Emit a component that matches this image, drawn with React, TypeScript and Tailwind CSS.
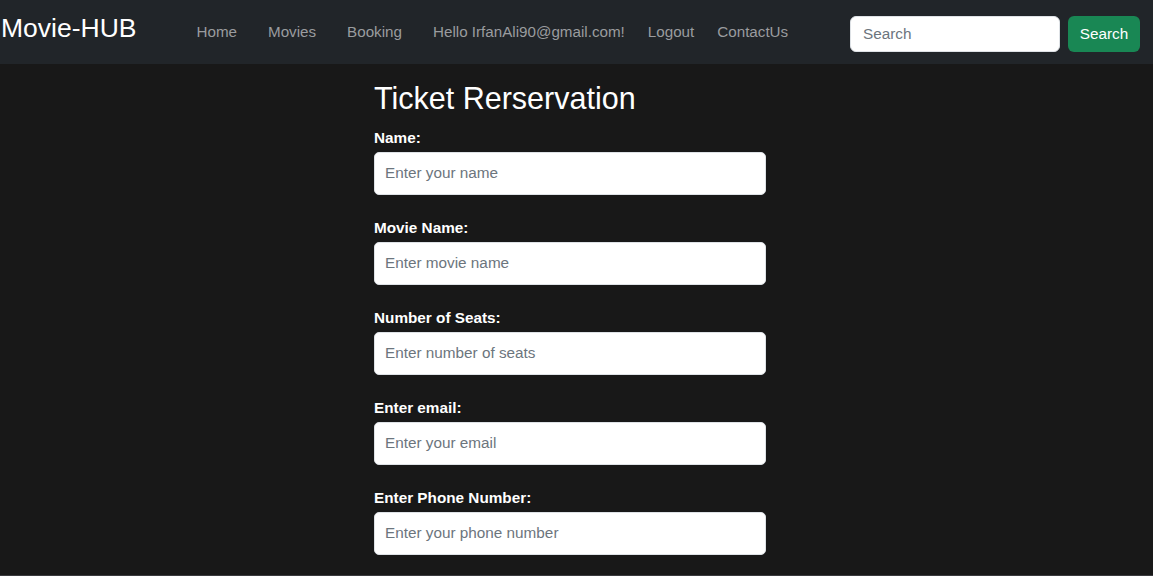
import React from "react";

const fields = [
  { label: "Name:", placeholder: "Enter your name" },
  { label: "Movie Name:", placeholder: "Enter movie name" },
  { label: "Number of Seats:", placeholder: "Enter number of seats" },
  { label: "Enter email:", placeholder: "Enter your email" },
  { label: "Enter Phone Number:", placeholder: "Enter your phone number" },
];

export default function App() {
  return (
    <div
      className="w-[1153px] h-[576px] overflow-hidden bg-[#181818] flex flex-col"
      style={{ fontFamily: '"Liberation Sans", Arial, sans-serif' }}
    >
      <nav className="h-[64px] shrink-0 bg-[#212529] flex items-center">
        <div className="text-[26.5px] text-white leading-none pl-[1px] pb-[7px]">Movie-HUB</div>
        <div className="flex items-center text-[15.2px] text-[#9a9c9f] ml-[60px] pt-[1px]">
          <span>Home</span>
          <span className="ml-[31px]">Movies</span>
          <span className="ml-[31px]">Booking</span>
          <span className="ml-[31px]">Hello IrfanAli90@gmail.com!</span>
          <span className="ml-[23px]">Logout</span>
          <span className="ml-[23px]">ContactUs</span>
        </div>
        <div className="ml-auto flex items-center mr-[13px] mt-[4px]">
          <input
            className="w-[210px] h-[36px] rounded-[6px] bg-white border border-[#dee2e6] px-[12px] text-[15.3px] text-[#212529] placeholder:text-[#6c757d] outline-none"
            placeholder="Search"
          />
          <button className="ml-[8px] w-[72px] h-[36px] rounded-[6px] bg-[#198754] text-white text-[15.3px]">
            Search
          </button>
        </div>
      </nav>
      <main className="flex-1 flex justify-center pr-[13px]">
        <div className="w-[392px] flex flex-col">
          <h1 className="text-[30.5px] text-white leading-none mt-[19px] mb-[15px]">Ticket Rerservation</h1>
          {fields.map((f, i) => (
            <div key={i} className={i === 0 ? "" : "mt-[24px]"}>
              <div className="text-[15.3px] font-bold text-white leading-[18px] mb-[5px]">{f.label}</div>
              <input
                className="w-[392px] h-[43px] rounded-[5px] bg-white border border-[#dee2e6] px-[10px] text-[15.3px] text-[#212529] placeholder:text-[#6c757d] outline-none"
                placeholder={f.placeholder}
              />
            </div>
          ))}
        </div>
      </main>
      <div className="h-[1px] shrink-0 bg-[#3a3a3e]" />
    </div>
  );
}
